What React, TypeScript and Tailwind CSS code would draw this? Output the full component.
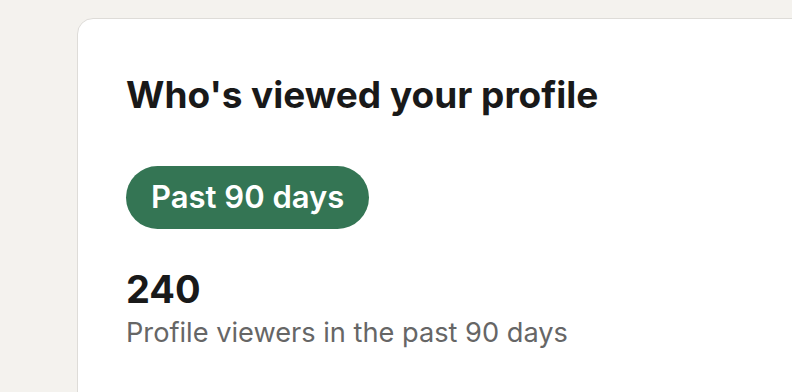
import React from 'react';

const stats = {
  viewers: 240,
  range: 'Past 90 days',
  caption: 'Profile viewers in the past 90 days',
};

export default function App() {
  return (
    <div
      className="h-[392px] w-[792px] overflow-hidden bg-[#f4f2ee] pl-[77px] pt-[18px]"
      style={{ fontFamily: 'Inter, "Noto Sans", sans-serif' }}
    >
      {/* Card */}
      <div className="h-[420px] w-[760px] rounded-[16px] border border-[#dedcd8] bg-white px-[48px] pt-[54px]">
        <h2 className="text-[37px] font-bold leading-[44px] text-[#191919]">
          Who's viewed your profile
        </h2>

        <div className="mt-[49px] flex">
          <button className="flex h-[63px] items-center rounded-full bg-[#347554] px-[25px] text-[31px] font-semibold text-white">
            {stats.range}
          </button>
        </div>

        <div className="mt-[38px]">
          <p className="text-[38px] font-bold leading-[44px] text-[#191919]">{stats.viewers}</p>
          <p className="mt-[6px] text-[27.2px] leading-[32px] text-[#666666]">{stats.caption}</p>
        </div>
      </div>
    </div>
  );
}
